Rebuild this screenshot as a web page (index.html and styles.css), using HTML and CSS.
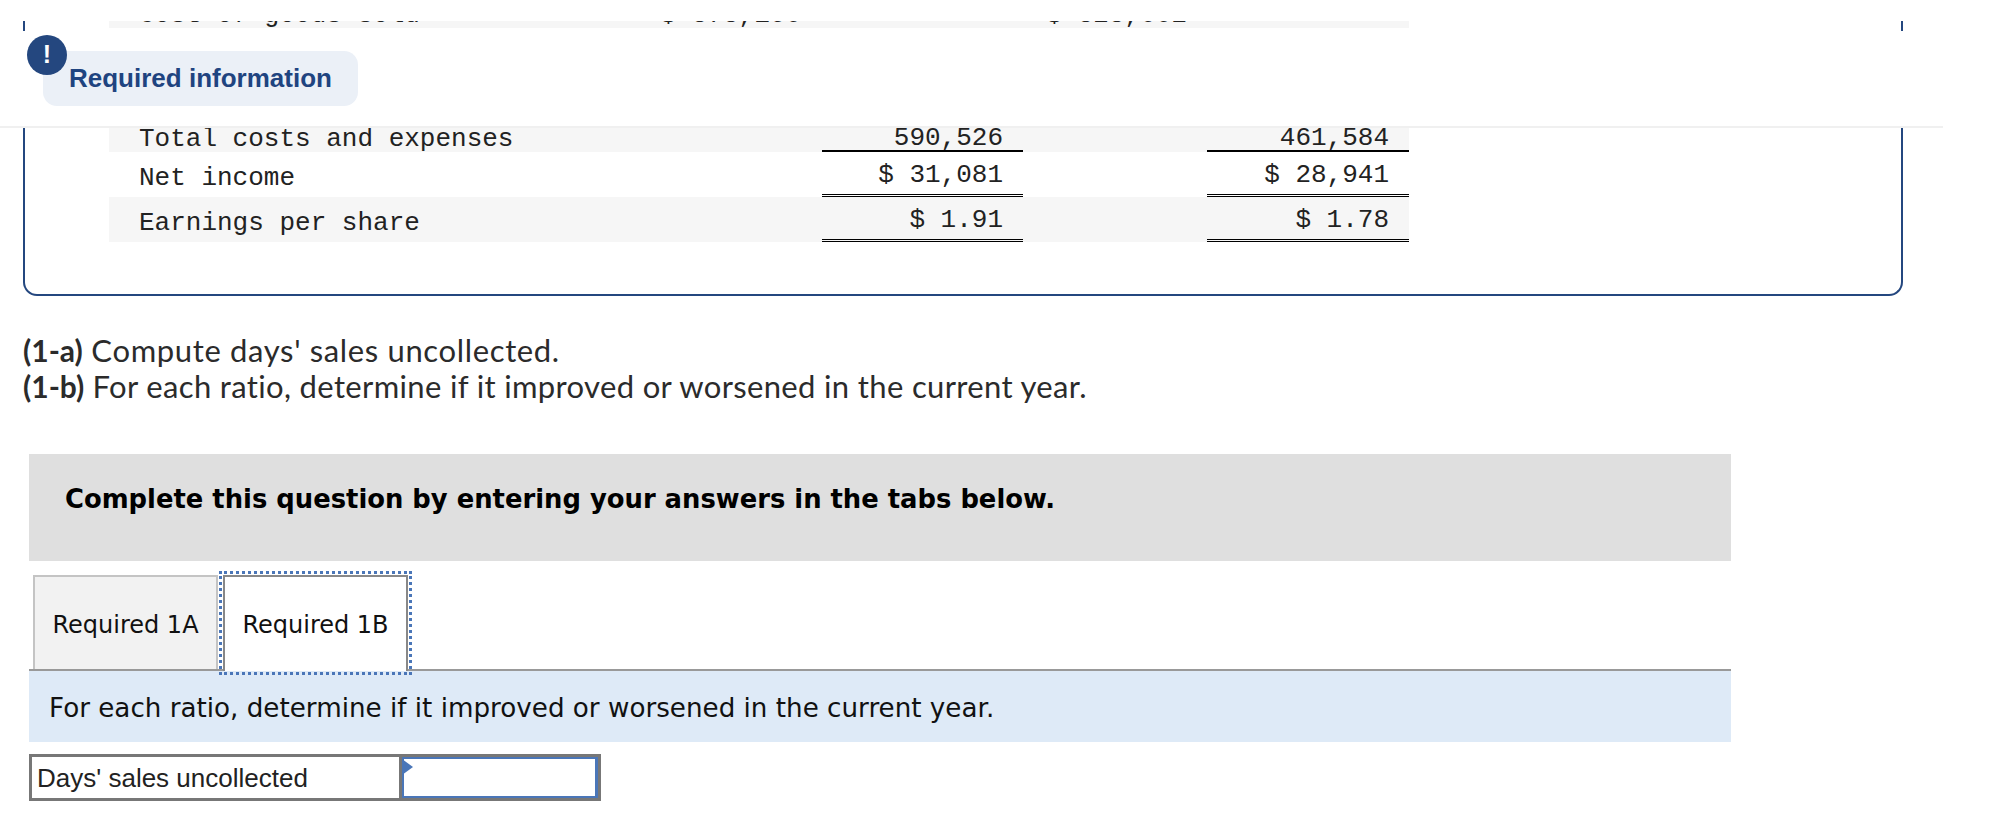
FILE: index.html
```html
<!DOCTYPE html>
<html lang="en">
<head>
<meta charset="utf-8">
<title>Required information</title>
<link rel="stylesheet" href="styles.css">
</head>
<body>
<div class="peek">
  <div class="fin-row peek-row">
    <span class="fin-label">Cost of goods sold</span>
    <span class="fin-val">$ 373,160</span>
    <span class="fin-val">$ 328,002</span>
  </div>
</div>
<header class="sticky">
  <span class="alert">!</span>
  <h2 class="pill">Required information</h2>
</header>
<section class="card">
  <div class="fin-row shade first">
    <span class="fin-label">Total costs and expenses</span>
    <span class="fin-val single">590,526</span>
    <span class="fin-val single">461,584</span>
  </div>
  <div class="fin-row tall">
    <span class="fin-label">Net income</span>
    <span class="fin-val double">$ 31,081</span>
    <span class="fin-val double">$ 28,941</span>
  </div>
  <div class="fin-row tall shade">
    <span class="fin-label">Earnings per share</span>
    <span class="fin-val double">$ 1.91</span>
    <span class="fin-val double">$ 1.78</span>
  </div>
</section>
<div class="prompt">
  <p><b>(1-a)</b> Compute days' sales uncollected.</p>
  <p><b>(1-b)</b> For each ratio, determine if it improved or worsened in the current year.</p>
</div>
<div class="worksheet">
  <div class="banner">Complete this question by entering your answers in the tabs below.</div>
  <div class="tabs">
    <button class="tab">Required 1A</button>
    <button class="tab active">Required 1B</button>
  </div>
  <div class="instruction">For each ratio, determine if it improved or worsened in the current year.</div>
  <div class="answer">
    <div class="answer-label">Days' sales uncollected</div>
    <div class="answer-input"></div>
  </div>
</div>
</body>
</html>
```
FILE: styles.css
```css
* { box-sizing: border-box; }
html, body { margin: 0; padding: 0; background: #fff; }
body { height: 821px; overflow: hidden; color: #222; }

.peek {
  margin: 21px 87px 0 23px;
  height: 10px;
  padding: 0 0 3px 84px;
  border-left: 2px solid #24477f;
  border-right: 2px solid #24477f;
}
.fin-row {
  display: flex;
  width: 1300px;
  font: 26px/1 "Liberation Mono", monospace;
  color: #222;
}
.fin-label { width: 713px; padding-left: 30px; }
.fin-val { width: 201px; margin-right: 184px; padding-right: 20px; text-align: right; }
.fin-val:last-child { width: 202px; margin-right: 0; }
.peek-row { height: 7px; overflow: hidden; background: #f6f6f6; align-items: flex-end; line-height: 26px; }
.peek-row span { flex: none; height: 26px; }
.peek-row .fin-label { width: 551px; }
.peek-row .fin-val { width: 141px; margin-right: 245px; padding-right: 0; }
.peek-row .fin-val:last-child { margin-right: 0; }

.sticky {
  height: 97px;
  width: 1943px;
  border-bottom: 2px solid #f0f0f0;
  padding: 20px 0 0 43px;
  position: relative;
}
.alert {
  position: absolute;
  left: 27px;
  top: 4px;
  width: 40px;
  height: 40px;
  border-radius: 50%;
  background: #24477f;
  color: #fff;
  font: bold 25px/38px "Liberation Sans", sans-serif;
  text-align: center;
}
.pill {
  margin: 0;
  width: 315px;
  height: 55px;
  padding-left: 26px;
  border-radius: 14px;
  background: #ebf0f7;
  color: #1f4480;
  font: bold 26px/55px "Liberation Sans", sans-serif;
}

.card {
  margin-left: 23px;
  width: 1880px;
  height: 168px;
  padding: 0 0 0 84px;
  border: 2px solid #24477f;
  border-top: 0;
  border-radius: 0 0 14px 14px;
}
.shade { background: #f6f6f6; }
.first { height: 24px; }
.tall { height: 45px; }
.first span { line-height: 20px; }
.first .fin-label { line-height: 22px; }
.tall .fin-label { line-height: 52px; }
.tall .fin-val { line-height: 47px; }
.single { border-bottom: 2px solid #000; }
.double { border-bottom: 3px double #000; }
.first .fin-val { height: 24px; }
.tall .fin-val { height: 45px; }

.prompt {
  margin: 36px 0 0 23px;
  font: 31px/36px "Lato", sans-serif;
  letter-spacing: 0.35px;
  color: #2b2b2b;
}
.prompt p { margin: 0; }
.prompt p:first-child { letter-spacing: 0.65px; }
.prompt b { font-size: 30px; letter-spacing: 0; }

.worksheet { margin: 50px 0 0 29px; width: 1702px; }
.banner {
  height: 107px;
  padding: 29px 0 0 36px;
  background: #dfdfdf;
  color: #000;
  font: bold 25.83px/32px "DejaVu Sans", sans-serif;
}
.tabs {
  display: flex;
  height: 110px;
  padding: 14px 0 0 4px;
  border-bottom: 2px solid #999;
}
.tab {
  width: 185px;
  height: 94px;
  margin-right: 5px;
  padding: 4px 0 0;
  background: #f2f2f2;
  border: 2px solid #c4c4c4;
  border-bottom: 0;
  color: #111;
  font: 24px "DejaVu Sans", sans-serif;
}
.tab.active {
  height: 96px;
  padding-top: 2px;
  background: #fff;
  border-color: #888;
  outline: 3px dotted #4a76b8;
  outline-offset: 1px;
  position: relative;
}
.instruction {
  height: 71px;
  padding-left: 20px;
  background: #deeaf7;
  color: #111;
  font: 26.2px/74px "DejaVu Sans", sans-serif;
}
.answer {
  display: flex;
  width: 572px;
  height: 47px;
  margin-top: 12px;
  border: 3px solid #777;
}
.answer-label {
  width: 370px;
  padding-left: 5px;
  border-right: 3px solid #777;
  color: #222;
  font: 26px/42px "Liberation Sans", sans-serif;
}
.answer-input {
  flex: 1;
  border: solid #4a76b8;
  border-width: 2px 3px 2px 2px;
  position: relative;
}
.answer-input::before {
  content: "";
  position: absolute;
  left: -2px;
  top: 0;
  border-left: 11px solid #4a76b8;
  border-top: 8px solid transparent;
  border-bottom: 8px solid transparent;
}
```
